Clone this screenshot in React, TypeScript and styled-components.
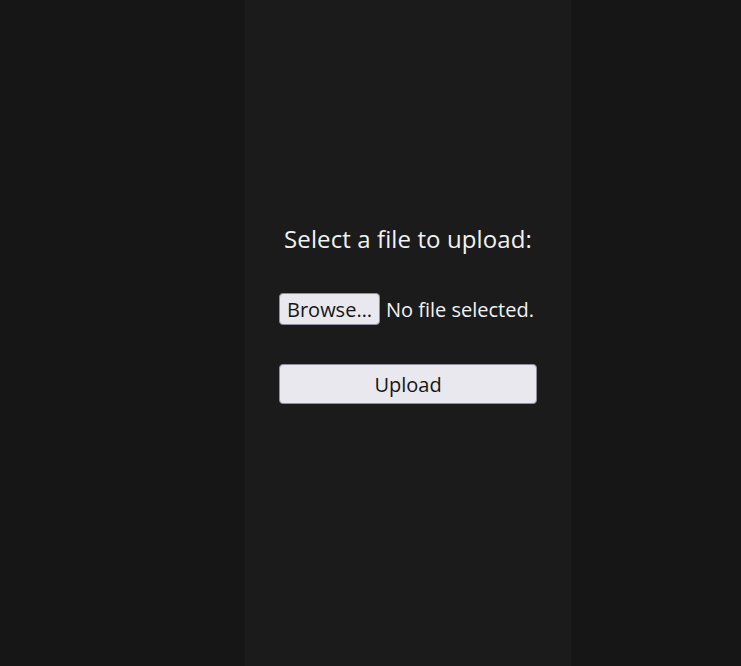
import React from "react";
import styled, { createGlobalStyle } from "styled-components";

const GlobalStyle = createGlobalStyle`
  html, body {
    margin: 0;
    padding: 0;
    background: #161616;
    font-family: "Open Sans", "Noto Sans", sans-serif;
  }
`;

// full window, column sits right of center
const Page = styled.div`
  display: grid;
  grid-template-columns: 245px 326px 1fr;
  height: 666px;
  background: #161616;
`;

const Column = styled.main`
  grid-column: 2;
  background: #1b1b1b;
  display: flex;
  flex-direction: column;
  align-items: center;
  padding-top: 222px;
  box-sizing: border-box;
`;

const Title = styled.h1`
  margin: 0;
  font-size: 24px;
  font-weight: 500;
  color: #f2f2f2;
  letter-spacing: 0.1px;
`;

const Form = styled.form`
  display: flex;
  flex-direction: column;
  align-items: stretch;
  margin-top: 38px;
  width: 258px;
`;

const FileRow = styled.label`
  display: flex;
  align-items: center;
  gap: 6px;
  white-space: nowrap;
  cursor: pointer;
`;

const HiddenInput = styled.input`
  display: none;
`;

const Button = styled.button<{ $wide?: boolean }>`
  font-family: inherit;
  font-size: 20px;
  color: #151515;
  background: #e9e8ee;
  border: 1px solid #8f8f9d;
  border-radius: 4px;
  padding: 0 7px;
  height: ${(p) => (p.$wide ? "40px" : "32px")};
  width: ${(p) => (p.$wide ? "100%" : "auto")};
  cursor: pointer;
`;

const FakeButton = styled(Button).attrs({ as: "span" })`
  display: inline-flex;
  align-items: center;
  box-sizing: border-box;
`;

const FileStatus = styled.span`
  font-size: 20px;
  color: #f2f2f2;
`;

const Spacer = styled.div`
  height: 39px;
`;

export default function App() {
  return (
    <>
      <GlobalStyle />
      <Page>
        <Column>
          <Title>Select a file to upload:</Title>
          <Form onSubmit={(e) => e.preventDefault()}>
            <FileRow>
              <HiddenInput type="file" />
              <FakeButton>Browse…</FakeButton>
              <FileStatus>No file selected.</FileStatus>
            </FileRow>
            <Spacer />
            <Button $wide type="submit">
              Upload
            </Button>
          </Form>
        </Column>
      </Page>
    </>
  );
}
